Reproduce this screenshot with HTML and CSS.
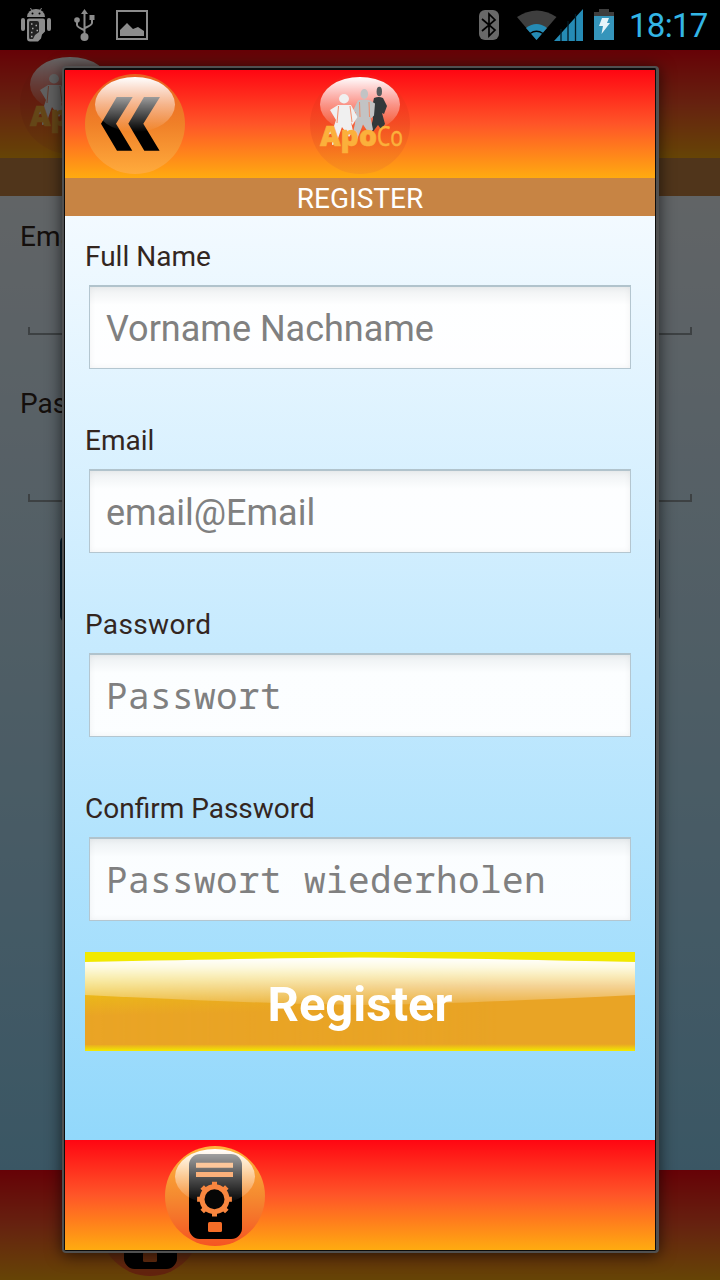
FILE: index.html
```html
<!DOCTYPE html>
<html lang="en">
<head>
<meta charset="utf-8">
<title>Register</title>
<link rel="stylesheet" href="styles.css">
</head>
<body>
<svg class="defs" aria-hidden="true">
  <defs>
    <linearGradient id="gloss" x1="0" y1="0" x2="0" y2="1">
      <stop offset="0" stop-color="#fff"/><stop offset=".5" stop-color="#fff" stop-opacity=".47"/><stop offset="1" stop-color="#fff" stop-opacity="0"/>
    </linearGradient>
    <linearGradient id="disc" x1="0" y1="0" x2="0" y2="1">
      <stop offset="0" stop-color="#e95f20"/><stop offset=".5" stop-color="#f08028"/><stop offset="1" stop-color="#ffab3c"/>
    </linearGradient>
    <linearGradient id="disc-red" x1="0" y1="0" x2="0" y2="1">
      <stop offset="0" stop-color="#ffb43c"/><stop offset=".5" stop-color="#f58a30"/><stop offset="1" stop-color="#f55522"/>
    </linearGradient>
    <linearGradient id="disc-dim" x1="0" y1="0" x2="0" y2="1">
      <stop offset="0" stop-color="#f81818"/><stop offset=".5" stop-color="#f04a22"/><stop offset="1" stop-color="#f7941d"/>
    </linearGradient>
    <linearGradient id="btn-left" x1="0" y1="0" x2=".12" y2="1">
      <stop offset="0" stop-color="#f0e800"/><stop offset=".42" stop-color="#ebbb18"/><stop offset=".68" stop-color="#e9a425"/>
    </linearGradient>
    <linearGradient id="btn-gloss" x1="0" y1="6" x2="0" y2="54" gradientUnits="userSpaceOnUse">
      <stop offset="0" stop-color="#fff"/><stop offset=".2" stop-color="#fff" stop-opacity=".87"/><stop offset="1" stop-color="#fff" stop-opacity=".12"/>
    </linearGradient>
    <linearGradient id="btn-base" x1="0" y1="0" x2="0" y2="1">
      <stop offset="0" stop-color="#f3ef00"/><stop offset=".1" stop-color="#f0dc00"/><stop offset=".34" stop-color="#e9a425"/><stop offset=".93" stop-color="#e9a425"/><stop offset="1" stop-color="#f2ea00"/>
    </linearGradient>
    <linearGradient id="btn-warm" x1="0" y1="0" x2="1" y2="0">
      <stop offset="0" stop-color="#fff"/><stop offset=".75" stop-color="#000"/>
    </linearGradient>
    <mask id="btn-fade"><rect width="550" height="93" fill="url(#btn-warm)"/></mask>
    <symbol id="logo" viewBox="0 0 100 100">
      <circle cx="50" cy="50" r="50" fill="url(#disc-dim)" opacity=".75"/>
      <ellipse cx="50" cy="30.5" rx="40" ry="27.5" fill="url(#gloss)"/>
      <g fill="#33383a">
        <ellipse cx="69.300" cy="17.500" rx="2.700" ry="4.700" fill="#555a5c"/>
        <path d="M64 24q5-2 9 0l4 8-3 8-2-1 3 11-4 5-3-4-6 8-2-2 3-12-1-12z"/>
      </g>
      <g fill="#c2c3c4">
        <ellipse cx="54.300" cy="20" rx="3.800" ry="5"/>
        <path d="M48 26.500q6-2 12 0l5 3-1 12-3 3-1-3 3 14-4 4-6-9-6 15-5-3 3-13 1-11-3-2z"/>
        <path d="M49.500 28l.5 15M59 28l.5 15" fill="none" stroke="#f5835d" stroke-width=".9"/>
      </g>
      <g fill="#f0f0f0">
        <ellipse cx="34" cy="24.800" rx="5" ry="4.700"/>
        <path d="M28 31h13l6.500 12-5 8-1.500-3 2 9-4 6-7-10-6 17-4 1 1-12-6 2 7-9 2-6-6-10z"/>
        <path d="M28.500 32l-1.500 17M40 32l2 16" fill="none" stroke="#f5835d" stroke-width=".9"/>
      </g>
      <g class="logo-text">
        <text x="10" y="72" class="logo-bold" textLength="57" lengthAdjust="spacingAndGlyphs">Apo</text>
        <text x="67" y="72" class="logo-thin" textLength="26" lengthAdjust="spacingAndGlyphs">Co</text>
      </g>
    </symbol>
    <symbol id="settings" viewBox="0 0 100 100">
      <circle cx="50" cy="50" r="50" fill="url(#disc-red)"/>
      <rect x="24" y="8" width="53" height="85" rx="11"/>
      <ellipse cx="50" cy="30.5" rx="40" ry="27.5" fill="url(#gloss)"/>
      <rect x="24" y="8" width="53" height="85" rx="11" opacity=".3"/>
      <path d="M31 16.700h37v5H31z" fill="#fcc79b"/>
      <path d="M31 26h37v5H31z" fill="#fab07a"/>
      <g fill="none" stroke="#f8863f" stroke-width="5">
        <path d="M49.500 35.800v34.800M32.100 53.200h34.800M37.200 40.900l24.600 24.600M61.800 40.900L37.200 65.500"/>
        <circle cx="49.500" cy="53.200" r="12.500" fill="#060606"/>
      </g>
      <rect x="43" y="76" width="14" height="10" rx="1.500" fill="#f56d27"/>
    </symbol>
  </defs>
</svg>

<div class="screen">
  <div class="status">
    <div class="status-left">
      <svg class="ic-droid" viewBox="0 0 30 34" fill="#8c8c8c">
        <path d="M6 9a9 8 0 0 1 18 0z"/><path d="M9.500 0l2 4M20.500 0l-2 4" stroke="#8c8c8c"/>
        <rect x="0" y="10" width="4" height="13" rx="2"/><rect x="26" y="10" width="4" height="13" rx="2"/>
        <path d="M8 10.500h14q2 0 2 2v11l-3 3-1 4-3 3H9q-3 0-3-3V12.500q0-2 2-2z"/>
        <path d="M9 13h7q2 0 2 2v9l-4 3-2 4H9q-1 0-1-2V15q0-2 1-2z" fill="#222"/>
        <path d="M10 16h1.500m3 1.500H16m-5 3h1.500m3 2H17m-7 2h1.500m-1.500 4h1.500" stroke="#aaa" stroke-width="1.500"/>
        <circle cx="11.500" cy="5.500" r="1" fill="#000"/><circle cx="18.500" cy="5.500" r="1" fill="#000"/>
      </svg>
      <svg class="ic-usb" viewBox="0 0 22 32" fill="none" stroke="#8c8c8c" stroke-width="2">
        <path d="M10.500 4v22M3 11v5q0 2 7 5M18 9v5q0 2-7 5"/>
        <g fill="#8c8c8c" stroke="none"><path d="M7 5l3.500-5L14 5z"/><circle cx="10.500" cy="28" r="4"/><circle cx="3" cy="11" r="2.800"/><path d="M15.500 6h5v5h-5z"/></g>
      </svg>
      <svg class="ic-pic" viewBox="0 0 32 30" fill="#8c8c8c">
        <path d="M1 1h30v28H1z" fill="none" stroke="#8c8c8c" stroke-width="2"/><path d="M4 26v-6l7-7 6 6 5-2 6 4v5z"/>
      </svg>
    </div>
    <div class="status-right">
      <svg class="ic-bt" viewBox="0 0 20 30"><rect width="20" height="30" rx="6" fill="#686868"/><path d="M3 9l13 11-6 6V4l6 6L3 21" fill="none" stroke="#000" stroke-width="1.700"/></svg>
      <svg class="ic-wifi" viewBox="0 0 40 30">
        <path d="M0 7Q20-6 39.500 7L19.500 30z" fill="#3e3e3e"/>
        <path d="M9 18Q19.500 10 30 18L19.500 30z" fill="#258bb5"/>
        <path d="M13 23.500Q19.500 19 26 23.500" fill="none" stroke="#000" stroke-width="1.400"/>
      </svg>
      <svg class="ic-signal" viewBox="0 0 29 32"><path d="M0 32L29 0v32z" fill="#258bb5"/><path d="M7 20v12M14 12v20M21.500 5v27" stroke="#001a26" stroke-width="1.300"/></svg>
      <svg class="ic-batt" viewBox="0 0 20 31"><path d="M0 3h5V0h10v3h5v5H0z" fill="#3e3e3e"/><path d="M0 7h20v24H0z" fill="#3595bb"/><path d="M8 9h7l-2 5h3L7.500 25l1.500-8H5z" fill="#e6f4fa"/></svg>
      <span class="clock">18:17</span>
    </div>
  </div>

  <div class="page">
    <div class="topbar"><svg class="badge"><use href="#logo"/></svg></div>
    <div class="titlebar"></div>
    <div class="login">
      <div class="label">Email</div>
      <div class="underline"></div>
      <div class="label">Password</div>
      <div class="underline"></div>
      <div class="login-button"></div>
    </div>
    <div class="bottombar"><svg class="badge"><use href="#settings"/></svg></div>
    <div class="dim"></div>
  </div>

  <div class="dialog">
    <div class="topbar topbar-dialog">
      <svg class="badge" viewBox="0 0 100 100">
        <circle cx="50" cy="50" r="50" fill="url(#disc)"/>
        <path d="M31.700 23h16L31 49.700l16.300 27H32l-16-27zM59 23h16L58.300 49.700l16.300 27H59.300l-16-27z"/>
        <ellipse cx="50" cy="30.500" rx="40" ry="27.500" fill="url(#gloss)"/>
      </svg>
      <svg class="badge"><use href="#logo"/></svg>
    </div>
    <div class="titlebar"><span>REGISTER</span></div>
    <form class="form">
      <label class="label">Full Name</label>
      <div class="field">Vorname Nachname</div>
      <label class="label">Email</label>
      <div class="field">email@Email</div>
      <label class="label label-wide">Password</label>
      <div class="field field-mono">Passwort</div>
      <label class="label">Confirm Password</label>
      <div class="field field-mono">Passwort wiederholen</div>
      <div class="button">
        <svg class="button-face" viewBox="0 0 550 99">
          <rect width="550" height="99" fill="url(#btn-base)"/>
          <rect width="550" height="93" fill="url(#btn-left)" mask="url(#btn-fade)"/>
          <path d="M0 0H550V10L275 5 0 10z" fill="#f1e900"/>
          <path d="M0 10Q180 6 275 5.500Q370 6 550 10V43Q370 52 275 53Q180 52 0 43z" fill="url(#btn-gloss)"/>
        </svg>
        <span class="button-text">Register</span>
      </div>
    </form>
    <div class="bottombar"><svg class="badge"><use href="#settings"/></svg></div>
  </div>
</div>
</body>
</html>
```
FILE: styles.css
```css
* { box-sizing: border-box; }
body { margin: 0; background: #000; font-family: Roboto, "Noto Sans", sans-serif; }
.defs { position: absolute; width: 0; height: 0; }
.screen { position: relative; width: 720px; height: 1280px; overflow: hidden; }

.status { height: 50px; display: flex; justify-content: space-between; background: #000; }
.status-left { display: flex; align-items: center; gap: 20px; padding-left: 21px; }
.status-right { display: flex; align-items: center; padding-right: 11px; }
.ic-droid { width: 30px; height: 34px; }
.ic-usb { width: 22px; height: 32px; margin: 0 1px 0 3px; }
.ic-pic { width: 32px; height: 30px; margin-left: -1px; }
.ic-bt { width: 20px; height: 30px; margin-right: 18px; }
.ic-wifi { width: 40px; height: 30px; }
.ic-signal { width: 29px; height: 32px; margin: 0 11px 0 -3px; }
.ic-batt { width: 20px; height: 31px; margin-top: -1px; margin-right: 15px; }
.clock { width: 80px; font-size: 33px; line-height: 53px; color: #33b5e5; letter-spacing: -0.7px; white-space: nowrap; }

.page { position: relative; height: 1230px; display: flex; flex-direction: column; }
.dim { position: absolute; inset: 0; background: rgba(0, 0, 0, .6); }
.topbar { height: 108px; padding: 4px 20px; background: linear-gradient(#ff0612, #ff5528 50%, #ffab10); }
.topbar-dialog { display: flex; gap: 125px; }
.titlebar { height: 38px; line-height: 41px; background: #c78444; color: #fff; text-align: center; font-size: 28px; }
.badge { display: block; width: 100px; height: 100px; }
.bottombar { height: 110px; padding: 6px 100px 0; background: linear-gradient(#ff0612, #ff5528 50%, #ffab10); }
.label { display: block; height: 40px; line-height: 42px; font-size: 28px; color: #33261f; }
.label-wide { letter-spacing: .35px; }

.login { flex: 1; padding: 20px 20px 0; background: linear-gradient(#f3faff, #92d8fb); }
.underline { height: 8px; margin: 71px 8px 48px; border: solid #9aa4a8; border-width: 0 2px 2px; }
.login-button { height: 86px; margin: -14px 40px 0; border-radius: 6px; background: #104a70; }

.dialog {
  position: absolute; left: 62px; top: 66px; width: 597px; height: 1187px;
  border: 2px solid #505050; border-width: 2px 3px 2px 2px; border-radius: 4px; background: #0c0c0c;
  padding: 2px 1px 1px; display: flex; flex-direction: column;
  box-shadow: 0 2px 16px rgba(0, 0, 0, .65);
}
.form { flex: 1; padding: 20px 20px 0; background: linear-gradient(#f3faff, #c3e9fe 50%, #92d8fb); }
.field {
  height: 84px; margin: 9px 4px 51px; padding-left: 16px;
  border: 1px solid #b4c6d0; border-top: 2px solid #b1c3cc;
  background: linear-gradient(rgba(238, 240, 241, .95), rgba(255, 255, 255, .95) 18px);
  box-shadow: inset 0 0 6px rgba(0, 0, 0, .06);
  font-size: 36px; line-height: 84px; color: #808080; white-space: nowrap;
}
.field-mono { font-family: "Droid Sans Mono", "Noto Sans Mono", "DejaVu Sans Mono", monospace; letter-spacing: .4px; line-height: 82px; }
.button { display: grid; height: 99px; margin-top: -20px; }
.button-face, .button-text { grid-area: 1 / 1; }
.button-face { width: 550px; height: 99px; }
.button-text { z-index: 1; text-align: center; font-size: 49px; font-weight: 700; line-height: 105px; color: #fff; }
.logo-text { fill: #fbb03b; stroke: #fbb03b; stroke-width: .6; }
.logo-bold { font: 800 28px "Open Sans", sans-serif; }
.logo-thin { font: 28px "Open Sans", sans-serif; }
```
